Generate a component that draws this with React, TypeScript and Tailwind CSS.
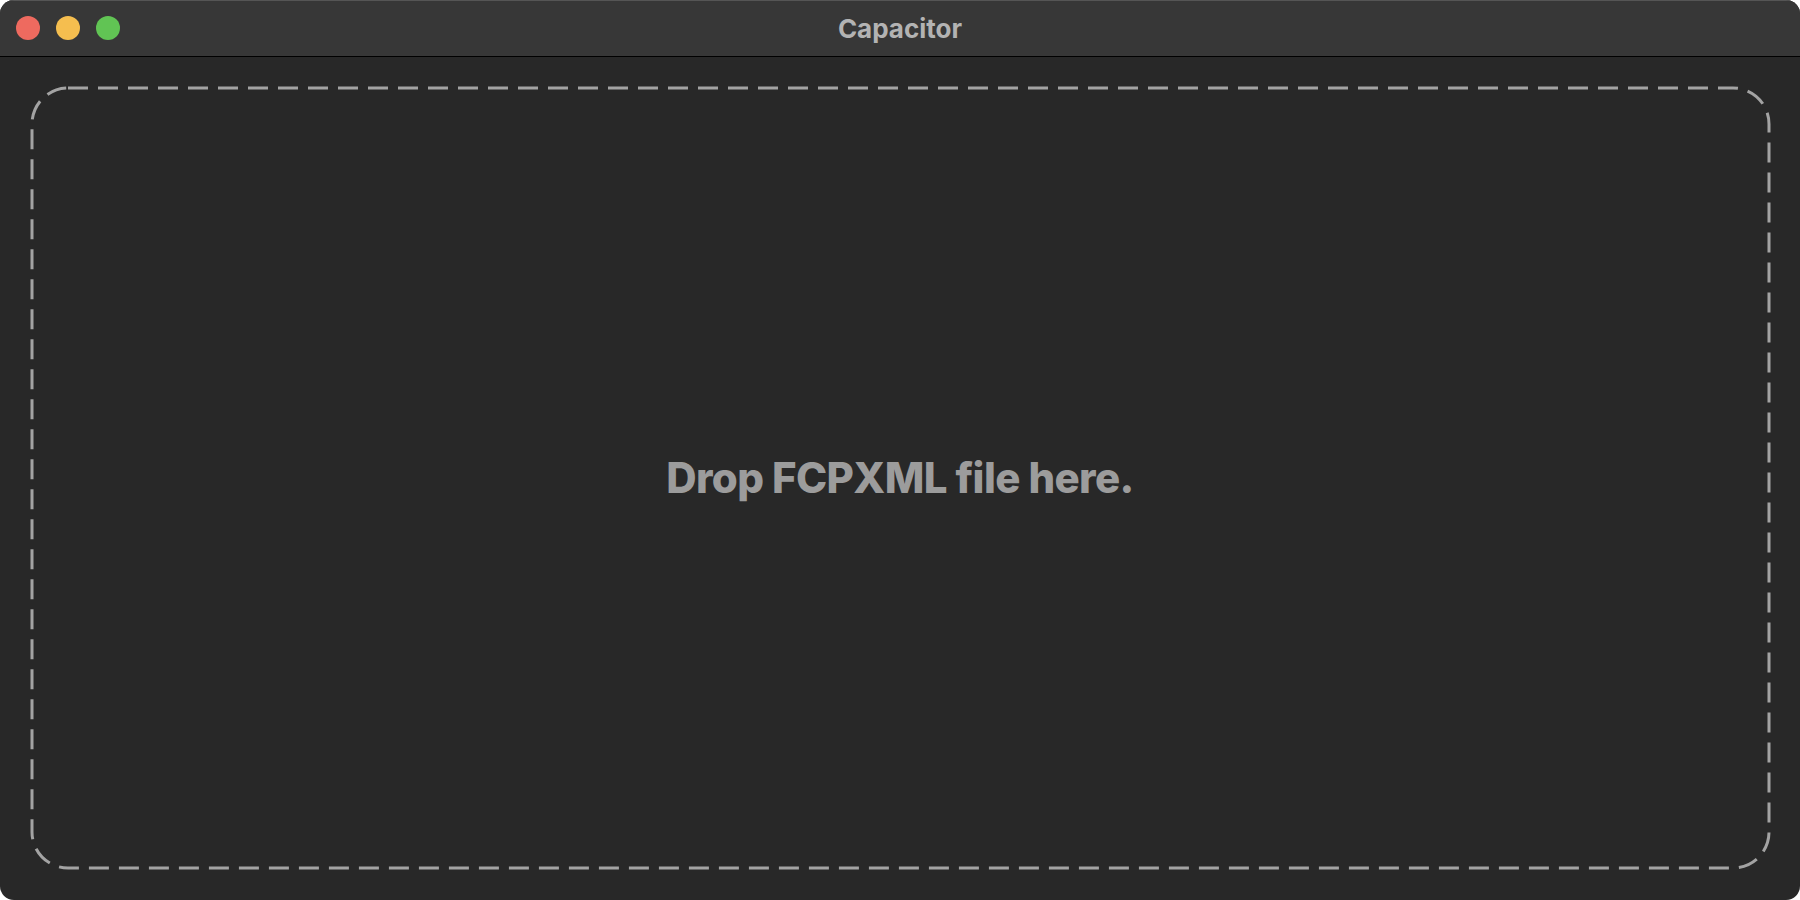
export default function App() {
  return (
    <div className="h-screen w-full bg-white">
      <div className="flex h-full flex-col overflow-hidden rounded-[14px] bg-[#282828]">
        {/* Title bar */}
        <div className="relative flex h-[57px] shrink-0 items-center border-b border-black bg-[#373737] shadow-[inset_0_1px_0_#555]">
          <div className="flex items-center gap-4 pl-4">
            <span className="h-6 w-6 rounded-full bg-[#ee6a5f]" />
            <span className="h-6 w-6 rounded-full bg-[#f5be4f]" />
            <span className="h-6 w-6 rounded-full bg-[#61c454]" />
          </div>
          <div className="pointer-events-none absolute inset-0 flex items-center justify-center">
            <span className="font-['Inter',sans-serif] text-[26px] font-bold text-[#b3b3b3]">
              Capacitor
            </span>
          </div>
        </div>

        {/* Drop zone */}
        <div className="flex flex-1 px-[30px] pt-[29px] pb-[31px]">
          <div className="relative flex flex-1 items-center justify-center">
            <svg className="absolute inset-[1.5px] h-[calc(100%-3px)] w-[calc(100%-3px)] overflow-visible">
              <rect
                x="0"
                y="0"
                width="100%"
                height="100%"
                rx="36"
                fill="none"
                stroke="#a3a3a3"
                strokeWidth="3"
                strokeDasharray="20 10"
              />
            </svg>
            <p className="font-['Inter',sans-serif] text-[42px] font-extrabold tracking-[-0.6px] text-[#9c9c9c]">
              Drop FCPXML file here.
            </p>
          </div>
        </div>
      </div>
    </div>
  );
}
